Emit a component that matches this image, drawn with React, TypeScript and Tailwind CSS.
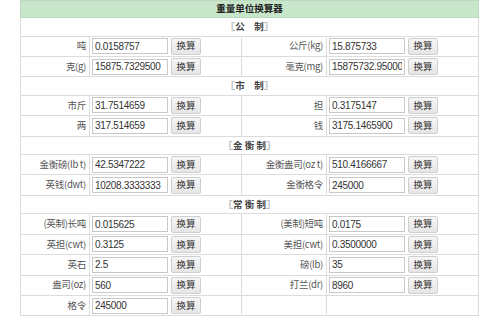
import React from "react";

type Cell = { label: string; value: string } | null;
type Section = { title: string; rows: [Cell, Cell][] };

const sections: Section[] = [
  {
    title: "〖公　制〗",
    rows: [
      [{ label: "吨", value: "0.0158757" }, { label: "公斤(kg)", value: "15.875733" }],
      [{ label: "克(g)", value: "15875.7329500" }, { label: "毫克(mg)", value: "15875732.950000" }],
    ],
  },
  {
    title: "〖市　制〗",
    rows: [
      [{ label: "市斤", value: "31.7514659" }, { label: "担", value: "0.3175147" }],
      [{ label: "两", value: "317.514659" }, { label: "钱", value: "3175.1465900" }],
    ],
  },
  {
    title: "〖金 衡 制〗",
    rows: [
      [{ label: "金衡磅(lb t)", value: "42.5347222" }, { label: "金衡盎司(oz t)", value: "510.4166667" }],
      [{ label: "英钱(dwt)", value: "10208.3333333" }, { label: "金衡格令", value: "245000" }],
    ],
  },
  {
    title: "〖常 衡 制〗",
    rows: [
      [{ label: "(英制)长吨", value: "0.015625" }, { label: "(美制)短吨", value: "0.0175" }],
      [{ label: "英担(cwt)", value: "0.3125" }, { label: "美担(cwt)", value: "0.3500000" }],
      [{ label: "英石", value: "2.5" }, { label: "磅(lb)", value: "35" }],
      [{ label: "盎司(oz)", value: "560" }, { label: "打兰(dr)", value: "8960" }],
      [{ label: "格令", value: "245000" }, null],
    ],
  },
];

const font = "font-['Noto_Sans_CJK_SC','Liberation_Sans',sans-serif]";

function LabelCell({ cell }: { cell: Cell }) {
  return (
    <td className="h-[20.4px] border border-[#dcdcdc] p-0 pr-[3px] text-right text-[9.5px] tracking-[-0.3px] text-[#555] whitespace-nowrap leading-none">
      {cell ? cell.label : ""}
    </td>
  );
}

function ValueCell({ cell }: { cell: Cell }) {
  return (
    <td className="h-[20.4px] border border-[#dcdcdc] p-0 pl-[2px]">
      {cell ? (
        <div className="flex items-center gap-[3px]">
          <input
            readOnly
            value={cell.value}
            className="h-[16px] w-[76px] border border-[#c8c8c8] bg-white px-[2px] font-['Liberation_Sans',sans-serif] text-[10px] tracking-[-0.3px] text-[#333] outline-none"
          />
          <button className="flex h-[17px] w-[30px] items-center justify-center rounded-[2px] border border-[#cfcfcf] bg-gradient-to-b from-[#f6f6f6] to-[#e6e6e6] text-[9.5px] leading-none text-[#333]">
            换算
          </button>
        </div>
      ) : null}
    </td>
  );
}

export default function App() {
  return (
    <div className={`min-h-[317px] w-[499px] bg-white ${font}`}>
      <div className="pl-[20px]">
        <table className="w-[458px] table-fixed border-collapse border border-t-[#a8a8a8] border-r-[#b0b0b0] border-b-[#b0b0b0] border-l-[#c8c8c8]">
          <colgroup>
            <col className="w-[69px]" />
            <col className="w-[152px]" />
            <col className="w-[85px]" />
            <col className="w-[152px]" />
          </colgroup>
          <tbody>
            <tr>
              <td
                colSpan={4}
                className="h-[17px] border border-[#bcd8be] bg-[#c8e6c9] p-0 text-center text-[9.5px] font-bold leading-none text-[#222]"
              >
                重量单位换算器
              </td>
            </tr>
            {sections.map((s) => (
              <React.Fragment key={s.title}>
                <tr>
                  <td
                    colSpan={4}
                    className="h-[18.5px] border border-[#dcdcdc] p-0 text-center text-[9.5px] font-semibold leading-none text-[#444]"
                  >
                    {s.title}
                  </td>
                </tr>
                {s.rows.map((r, i) => (
                  <tr key={i}>
                    <LabelCell cell={r[0]} />
                    <ValueCell cell={r[0]} />
                    <LabelCell cell={r[1]} />
                    <ValueCell cell={r[1]} />
                  </tr>
                ))}
              </React.Fragment>
            ))}
          </tbody>
        </table>
      </div>
    </div>
  );
}
